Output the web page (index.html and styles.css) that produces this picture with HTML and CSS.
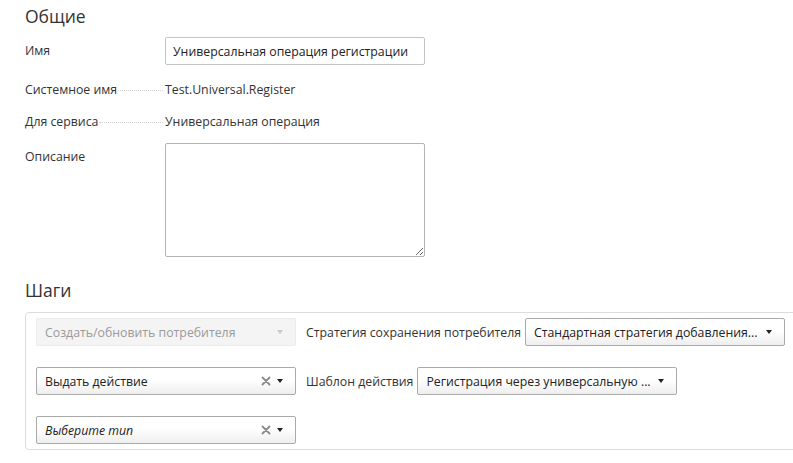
FILE: index.html
```html
<!DOCTYPE html>
<html lang="ru">
<head>
<meta charset="utf-8">
<link rel="stylesheet" href="styles.css">
</head>
<body>
<div class="page">
  <h2 class="section-title first">Общие</h2>
  <div class="form-row row-input">
    <div class="label">Имя</div>
    <input class="text-input" type="text" value="Универсальная операция регистрации">
  </div>
  <div class="form-row row-static">
    <div class="label leader"><span>Системное имя</span><i class="dots"></i></div>
    <div class="value">Test.Universal.Register</div>
  </div>
  <div class="form-row row-static">
    <div class="label leader"><span>Для сервиса</span><i class="dots"></i></div>
    <div class="value">Универсальная операция</div>
  </div>
  <div class="form-row row-textarea">
    <div class="label label-top">Описание</div>
    <textarea class="textarea"></textarea>
  </div>

  <h2 class="section-title steps-title">Шаги</h2>
  <div class="steps-panel">
    <div class="step-row">
      <div class="select disabled">
        <span class="select-text">Создать/обновить потребителя</span>
        <span class="arrow"></span>
      </div>
      <span class="step-label">Стратегия сохранения потребителя</span>
      <div class="select">
        <span class="select-text">Стандартная стратегия добавления...</span>
        <span class="arrow"></span>
      </div>
    </div>
    <div class="step-row">
      <div class="select">
        <span class="select-text">Выдать действие</span>
        <svg class="clear" width="10" height="10" viewBox="0 0 10 10"><path d="M1.5 1.5L8.5 8.5M8.5 1.5L1.5 8.5" stroke="#8a8a8a" stroke-width="1.8" stroke-linecap="round"/></svg>
        <span class="arrow"></span>
      </div>
      <span class="step-label">Шаблон действия</span>
      <div class="select">
        <span class="select-text">Регистрация через универсальную ...</span>
        <span class="arrow"></span>
      </div>
    </div>
    <div class="step-row">
      <div class="select">
        <span class="select-text italic">Выберите тип</span>
        <svg class="clear" width="10" height="10" viewBox="0 0 10 10"><path d="M1.5 1.5L8.5 8.5M8.5 1.5L1.5 8.5" stroke="#8a8a8a" stroke-width="1.8" stroke-linecap="round"/></svg>
        <span class="arrow"></span>
      </div>
    </div>
  </div>
</div>
</body>
</html>
```

FILE: styles.css
```css
html, body {
  margin: 0;
  padding: 0;
  overflow: hidden;
  background: #fff;
}
body {
  font-family: "Open Sans", "Noto Sans", sans-serif;
  font-size: 12.3px;
  color: #333;
}
.page {
  padding: 0 0 0 25px;
}
.section-title {
  font-size: 17.5px;
  font-weight: 400;
  line-height: 24px;
  margin: 0;
  color: #333;
}
.section-title.first {
  padding-top: 4px;
}
.form-row {
  display: flex;
  align-items: center;
}
.label {
  width: 140px;
  flex: none;
  line-height: 18px;
}
.row-input {
  margin-top: 9px;
  height: 28px;
}
.text-input {
  box-sizing: border-box;
  width: 260px;
  height: 28px;
  border: 1px solid #c4c4c4;
  border-radius: 2px;
  padding: 0 7px;
  font: inherit;
  color: #222;
  outline: none;
}
.row-static {
  height: 32px;
}
.row-input + .row-static {
  margin-top: 9px;
}
.leader {
  display: flex;
  align-items: baseline;
}
.leader .dots {
  flex: 1;
  border-bottom: 1px dotted #d0d0d0;
  margin: 0 2px 0 1px;
  transform: translateY(-3px);
}
.value {
  line-height: 18px;
  color: #333;
}
.row-textarea {
  align-items: flex-start;
  margin-top: 5px;
}
.label-top {
  padding-top: 5px;
}
.textarea {
  box-sizing: border-box;
  width: 260px;
  height: 114px;
  margin: 0;
  border: 1px solid #b5b5b5;
  border-radius: 2px;
  font: inherit;
  outline: none;
}
.steps-title {
  margin-top: 21px;
}
.steps-panel {
  margin-top: 10px;
  width: 800px;
  border: 1px solid #dcdcdc;
  border-radius: 4px;
  padding: 5px 0 5px 10px;
  display: flex;
  flex-direction: column;
  gap: 21px;
}
.step-row {
  display: flex;
  align-items: center;
  height: 28px;
}
.select {
  box-sizing: border-box;
  width: 260px;
  height: 28px;
  flex: none;
  display: flex;
  align-items: center;
  border: 1px solid #aaa;
  border-radius: 2px;
  padding: 0 12px 0 8px;
  background: linear-gradient(to bottom, #ffffff 0%, #ffffff 45%, #eeeeee 100%);
  color: #222;
}
.select-text {
  flex: 1;
  white-space: nowrap;
  overflow: hidden;
  text-overflow: ellipsis;
  margin-right: 6px;
}
.select-text.italic {
  font-style: italic;
}
.select .clear {
  margin-right: 6px;
}
.arrow {
  width: 0;
  height: 0;
  border-left: 3.5px solid transparent;
  border-right: 3.5px solid transparent;
  border-top: 4px solid #222;
}
.select.disabled {
  background: #f4f4f4;
  border-color: #ececec;
  color: #9a9a9a;
}
.select.disabled .arrow {
  border-top-color: #c8c8c8;
}
.select.disabled .select-text {
  color: #9a9a9a;
}
.step-label {
  margin: 0 4px 0 10px;
  white-space: nowrap;
  color: #333;
}
```
